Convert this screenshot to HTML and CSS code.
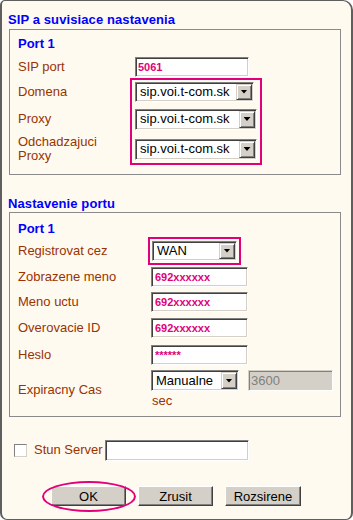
FILE: index.html
```html
<!DOCTYPE html>
<html>
  <head>
    <meta charset="UTF-8" />
    <link rel="stylesheet" href="styles.css">
  </head>
  <body>
    <div class="panel">
      <div class="section-title">SIP a suvisiace nastavenia</div>
      <div class="group group-sip">
        <div class="group-title">Port 1</div>
        <div class="form-grid grid-sip">
          <div class="label row-1">SIP port</div>
          <input class="field field-port row-1" type="text" value="5061">

          <div class="highlight highlight-servers"></div>

          <div class="label row-2">Domena</div>
          <div class="combo combo-domain row-2">
            <span class="combo-text">sip.voi.t-com.sk</span>
            <span class="combo-btn"><span class="combo-arrow"></span></span>
          </div>

          <div class="label row-3">Proxy</div>
          <div class="combo combo-server row-3">
            <span class="combo-text">sip.voi.t-com.sk</span>
            <span class="combo-btn"><span class="combo-arrow"></span></span>
          </div>

          <div class="label label-multi row-4">Odchadzajuci<br>Proxy</div>
          <div class="combo combo-server row-4">
            <span class="combo-text">sip.voi.t-com.sk</span>
            <span class="combo-btn"><span class="combo-arrow"></span></span>
          </div>
        </div>
      </div>

      <div class="section-title section-second">Nastavenie portu</div>
      <div class="group group-port">
        <div class="group-title group-title-port">Port 1</div>
        <div class="form-grid grid-port">
          <div class="label">Registrovat cez</div>
          <div class="cell">
            <div class="highlight-inline">
              <div class="combo combo-wan">
                <span class="combo-text">WAN</span>
                <span class="combo-btn"><span class="combo-arrow"></span></span>
              </div>
            </div>
          </div>

          <div class="label">Zobrazene meno</div>
          <input class="field field-account" type="text" value="692xxxxxx">

          <div class="label">Meno uctu</div>
          <input class="field field-account" type="text" value="692xxxxxx">

          <div class="label">Overovacie ID</div>
          <input class="field field-account" type="text" value="692xxxxxx">

          <div class="label">Heslo</div>
          <input class="field field-account field-password" type="text" value="******">

          <div class="label label-expiry">Expiracny Cas</div>
          <div class="expiry">
            <div class="expiry-controls">
              <div class="combo combo-mode">
                <span class="combo-text">Manualne</span>
                <span class="combo-btn"><span class="combo-arrow"></span></span>
              </div>
              <input class="field field-disabled" type="text" value="3600" disabled>
            </div>
            <div class="unit">sec</div>
          </div>
        </div>
      </div>

      <div class="stun-row">
        <input class="checkbox" type="checkbox">
        <span class="label">Stun Server</span>
        <input class="field field-stun" type="text" value="">
      </div>

      <div class="button-row">
        <span class="button-mark">
          <button class="button">OK</button>
        </span>
        <button class="button">Zrusit</button>
        <button class="button button-wide">Rozsirene</button>
      </div>
    </div>
  </body>
</html>
```

FILE: styles.css
```css
:root {
  --title-blue: #0000ff;
  --label-brown: #993300;
  --magenta: #e2007a;
  --cream: #fffaf0;
  --face: #d4d0c8;
  --shadow: #808080;
  --dark-shadow: #404040;
}

* {
  margin: 0;
  padding: 0;
  box-sizing: border-box;
}

body {
  font-family: "Liberation Sans", Arial, sans-serif;
  font-size: 13px;
  color: #000000;
  background-color: #ffffff;
}

.panel {
  width: 353px;
  height: 520px;
  background-color: var(--cream);
  border: solid #5f5f5f;
  border-width: 1px 2px 1px 2px;
  border-radius: 5px 10px 7px 7px;
  padding-top: 11px;
}

.section-title {
  font-weight: 700;
  color: var(--title-blue);
  line-height: 16px;
  padding-left: 6px;
  margin-bottom: 1px;
  letter-spacing: 0.1px;
}

.section-second {
  margin-top: 21px;
  margin-bottom: 0;
}

.group {
  width: 332px;
  margin-left: 7px;
  border: 1px solid #8a8a8a;
  padding: 6px 0 9px 8px;
}

.group-port {
  padding-top: 8px;
  padding-bottom: 7px;
}

.group-title {
  font-weight: 700;
  color: var(--title-blue);
  line-height: 16px;
  margin-bottom: 3px;
}

.group-title-port {
  margin-bottom: 0;
}

/* label / control grid */
.form-grid {
  display: grid;
  align-items: center;
}

.grid-sip {
  grid-template-columns: 117px 1fr;
  grid-template-rows: 23px 27px 28px 32px;
}

.grid-port {
  grid-template-columns: 133px 1fr;
  grid-template-rows: 27px 25px 26px 26px 27px 41px;
}

.row-1 { grid-row: 1; }
.row-2 { grid-row: 2; }
.row-3 { grid-row: 3; }
.row-4 { grid-row: 4; }

.label {
  grid-column: 1;
  color: var(--label-brown);
  line-height: 16px;
  white-space: nowrap;
}

.label-multi {
  line-height: 14px;
}

.label-expiry {
  margin-top: 3px;
}

.form-grid > .field,
.form-grid > .combo,
.form-grid > .cell,
.form-grid > .expiry {
  grid-column: 2;
  justify-self: start;
}

/* magenta annotation frames */
.highlight {
  grid-column: 2;
  grid-row: 2 / 5;
  align-self: stretch;
  width: 132px;
  margin-left: -5px;
  border: 2px solid var(--magenta);
}

.highlight-inline {
  display: inline-flex;
  margin-left: -3px;
  padding: 2px;
  border: 2px solid var(--magenta);
}

/* sunken text fields */
.field {
  height: 20px;
  border: 1px solid;
  border-color: var(--shadow) #ffffff #ffffff var(--shadow);
  box-shadow: inset 1px 1px var(--dark-shadow), inset -1px -1px var(--face);
  background-color: #ffffff;
  font-family: "Liberation Sans", Arial, sans-serif;
  font-size: 11px;
  font-weight: 700;
  color: var(--magenta);
  padding: 0 3px;
  outline: none;
}

.field-port {
  width: 114px;
  padding-left: 2px;
}

.field-account {
  width: 97px;
}

.field-disabled {
  width: 85px;
  height: 21px;
  background-color: var(--face);
  box-shadow: inset 1px 1px var(--shadow);
  border-color: var(--face) #ffffff #ffffff var(--face);
  font-size: 13px;
  font-weight: 400;
  color: var(--shadow);
  padding-left: 2px;
}

.field-stun {
  width: 144px;
  height: 21px;
}

/* drop-down boxes */
.combo {
  display: flex;
  align-items: center;
  height: 20px;
  padding: 1px;
  border: 1px solid;
  border-color: var(--shadow) #ffffff #ffffff var(--shadow);
  box-shadow: inset 1px 1px var(--dark-shadow), inset -1px -1px var(--face);
  background-color: #ffffff;
}

.combo-domain {
  width: 119px;
}

.combo-server {
  width: 122px;
  height: 21px;
}

.combo-wan {
  width: 85px;
}

.combo-mode {
  width: 88px;
  height: 21px;
}

.combo-text {
  flex: 1;
  padding-left: 3px;
  line-height: 16px;
  white-space: nowrap;
  overflow: hidden;
}

.combo-btn {
  display: flex;
  align-items: center;
  justify-content: center;
  width: 16px;
  height: 100%;
  flex-shrink: 0;
  background-color: var(--face);
  border: 1px solid;
  border-color: var(--face) var(--dark-shadow) var(--dark-shadow) var(--face);
  box-shadow: inset 1px 1px #ffffff, inset -1px -1px var(--shadow);
}

.combo-arrow {
  width: 7px;
  height: 4px;
  background-color: #000000;
  clip-path: polygon(0 0, 100% 0, 50% 100%);
}

.expiry {
  align-self: start;
  padding-top: 2px;
}

.expiry-controls {
  display: flex;
  gap: 9px;
}

.unit {
  color: var(--label-brown);
  line-height: 16px;
  margin-top: 2px;
  padding-left: 1px;
}

/* stun server */
.stun-row {
  display: flex;
  align-items: center;
  height: 22px;
  margin-top: 22px;
  padding-left: 12px;
}

.checkbox {
  appearance: none;
  width: 13px;
  height: 13px;
  margin: 0 7px 0 0;
  border: 1px solid;
  border-color: var(--shadow) var(--face) var(--face) var(--shadow);
  background-color: #ffffff;
}

.stun-row .label {
  margin-right: 2px;
}

/* buttons */
.button-row {
  display: flex;
  gap: 12px;
  margin-top: 25px;
  padding-left: 49px;
}

.button {
  width: 75px;
  height: 20px;
  background-color: var(--face);
  border: 1px solid;
  border-color: #ffffff var(--dark-shadow) var(--dark-shadow) #ffffff;
  box-shadow: inset -1px -1px var(--shadow);
  font-family: "Liberation Sans", Arial, sans-serif;
  font-size: 13px;
  color: #000000;
}

.button-wide {
  width: 76px;
}

.button-mark {
  position: relative;
  display: flex;
}

.button-mark::after {
  content: "";
  position: absolute;
  top: -5px;
  bottom: -6px;
  left: -9px;
  right: -10px;
  border: 2px solid var(--magenta);
  border-radius: 50%;
}
```
